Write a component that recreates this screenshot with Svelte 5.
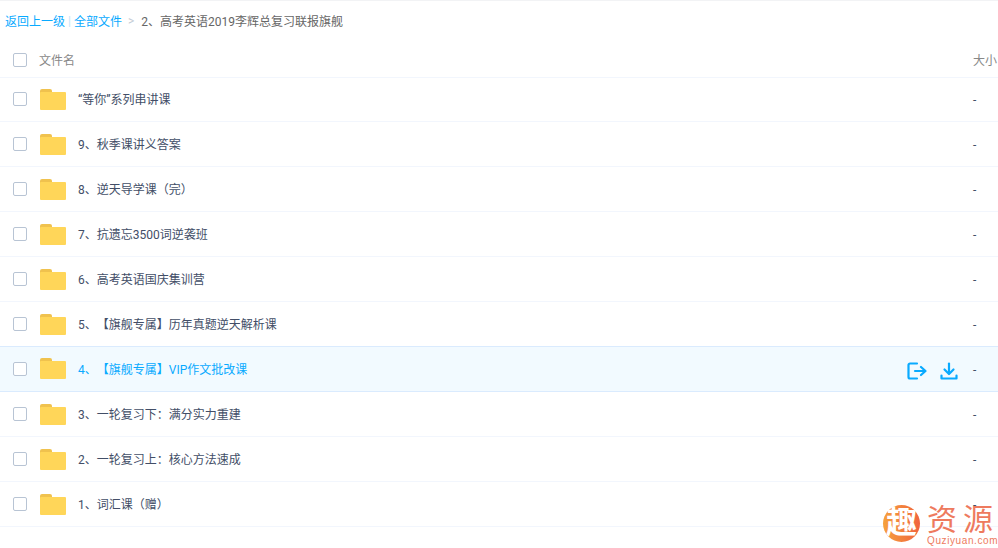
<script lang="ts">
  const files = [
    '“等你”系列串讲课',
    '9、秋季课讲义答案',
    '8、逆天导学课（完）',
    '7、抗遗忘3500词逆袭班',
    '6、高考英语国庆集训营',
    '5、【旗舰专属】历年真题逆天解析课',
    '4、【旗舰专属】VIP作文批改课',
    '3、一轮复习下：满分实力重建',
    '2、一轮复习上：核心方法速成',
    '1、词汇课（赠）'
  ];
  const activeIndex = 6;
</script>

{#snippet folder()}
  <svg class="folder" width="26" height="21" viewBox="0 0 26 21">
    <path d="M0 2a2 2 0 0 1 2-2h8a2 2 0 0 1 2 2v2H0z" fill="#f0c24e" />
    <path d="M0 4a1 1 0 0 1 1-1h24a1 1 0 0 1 1 1v16a1 1 0 0 1-1 1H1a1 1 0 0 1-1-1z" fill="#ffd659" />
  </svg>
{/snippet}

<div class="page">
  <div class="crumbs">
    <span class="link">返回上一级</span>
    <span class="bar">|</span>
    <span class="link">全部文件</span>
    <span class="sep">&gt;</span>
    <span>2、高考英语2019李辉总复习联报旗舰</span>
  </div>

  <div class="row head">
    <span class="check"></span>
    <span class="name">文件名</span>
    <span class="size">大小</span>
  </div>

  {#each files as file, i}
    <div class="row item" class:active={i === activeIndex}>
      <span class="check"></span>
      {@render folder()}
      <span class="name">{file}</span>
      {#if i === activeIndex}
        <div class="actions">
          <svg width="20" height="18" viewBox="0 0 20 18" fill="none" stroke="#09aaff" stroke-width="2.2" stroke-linecap="round" stroke-linejoin="round">
            <path d="M10 1.500H3a1.500 1.500 0 0 0-1.500 1.500v12A1.500 1.500 0 0 0 3 16.500h7" />
            <path d="M8 9h10" />
            <path d="M14 5l4.500 4-4.500 4" />
          </svg>
          <svg width="18" height="18" viewBox="0 0 18 18" fill="none" stroke="#09aaff" stroke-width="2.2" stroke-linecap="round" stroke-linejoin="round">
            <path d="M9 1.500v10" />
            <path d="M4.500 7.500L9 12l4.500-4.500" />
            <path d="M1.500 13.500v3h15v-3" />
          </svg>
        </div>
      {/if}
      <span class="size">-</span>
    </div>
  {/each}

  <div class="logo">
    <div class="badge">趣</div>
    <div class="brand">
      <div class="cn"><span>资</span><span>源</span></div>
      <div class="en">Quziyuan.com</div>
    </div>
  </div>
</div>

<style>
  :global(body) {
    margin: 0;
    background: #fff;
  }

  .page {
    position: relative;
    width: 998px;
    height: 548px;
    overflow: hidden;
    border-top: 1px solid #f2f3f5;
    box-sizing: border-box;
    font-family: Roboto, "Noto Sans CJK SC", sans-serif;
    font-size: 12px;
    color: #424e67;
    text-spacing-trim: space-all;
  }

  .crumbs {
    display: flex;
    align-items: center;
    box-sizing: border-box;
    height: 41px;
    padding: 0 0 2px 5px;
    color: #666;
  }

  .link {
    color: #09aaff;
  }

  .bar {
    margin: 0 3px;
    color: #c5e4f7;
  }

  .sep {
    margin: 0 7px 0 6px;
    color: #c4ccd6;
  }

  .row {
    display: flex;
    align-items: center;
    box-sizing: border-box;
    padding-left: 13px;
    border-bottom: 1px solid #f2f6fd;
  }

  .head {
    height: 36px;
    margin-bottom: -1px;
    color: #888;
  }

  .head .name {
    margin-left: 12px;
  }

  .item {
    height: 45px;
  }

  .item .name {
    margin-left: 12px;
    padding-bottom: 1px;
  }

  .item .size {
    padding-top: 2px;
  }

  .active {
    background: #f2faff;
    border-top: 1px solid #daebfe;
    border-bottom: 1px solid #daebfe;
    margin-top: -1px;
    height: 46px;
    padding-bottom: 1px;
  }

  .active .name {
    color: #09aaff;
  }

  .check {
    flex: none;
    box-sizing: border-box;
    width: 14px;
    height: 14px;
    border: 1px solid #b8c4d4;
    border-radius: 2px;
    background: #fff;
  }

  .folder {
    flex: none;
    margin-left: 13px;
  }

  .name {
    flex: 1;
  }

  .actions {
    display: flex;
    align-items: center;
    gap: 13px;
    margin: 4px 15px 0 0;
  }

  .size {
    flex: none;
    width: 25px;
  }

  .head .size {
    color: #888;
  }

  .logo {
    position: absolute;
    left: 883px;
    top: 504px;
    display: flex;
    align-items: flex-start;
    gap: 7px;
  }

  .badge {
    width: 37px;
    height: 37px;
    border-radius: 50%;
    background: linear-gradient(90deg, #f6a13c, #f0643f);
    color: #fff;
    font-size: 31px;
    font-weight: 700;
    line-height: 35px;
    text-align: center;
    white-space: nowrap;
  }

  .brand {
    color: #ee7a5e;
  }

  .cn {
    display: flex;
    gap: 6px;
    font-size: 30px;
    line-height: 30px;
  }

  .en {
    font-family: "Liberation Sans", sans-serif;
    font-size: 10px;
    line-height: 10px;
    margin-top: 1px;
    letter-spacing: 0.6px;
  }
</style>
